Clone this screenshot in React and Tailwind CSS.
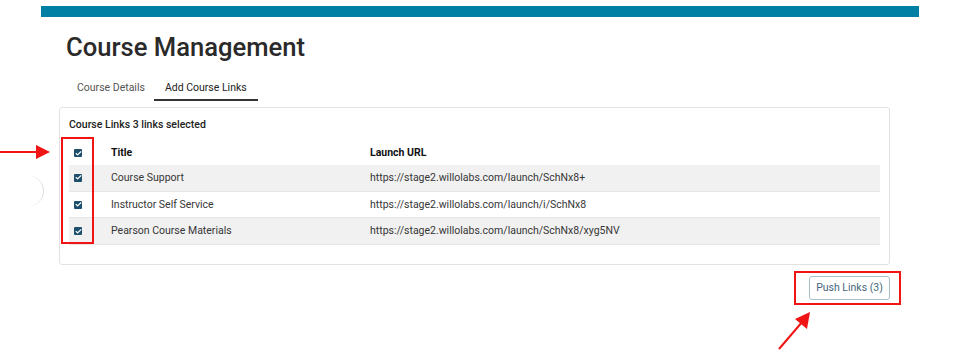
import { Check } from 'lucide-react';

const links = [
  { title: 'Course Support', url: 'https://stage2.willolabs.com/launch/SchNx8+' },
  { title: 'Instructor Self Service', url: 'https://stage2.willolabs.com/launch/i/SchNx8' },
  { title: 'Pearson Course Materials', url: 'https://stage2.willolabs.com/launch/SchNx8/xyg5NV' },
];

function Box() {
  return (
    <span className="flex h-[8px] w-[8px] items-center justify-center rounded-[1px] bg-[#1e4f6c]">
      <Check className="h-[7px] w-[7px] text-white" strokeWidth={4} />
    </span>
  );
}

export default function App() {
  return (
    <div className="relative h-[358px] w-[956px] overflow-hidden bg-white font-['Roboto',sans-serif]">
      {/* top bar */}
      <div className="ml-[41px] mt-[6px] h-[11px] w-[878px] bg-[#007fa5]" />

      <div className="ml-[59px] w-[831px]">
        <h1 className="ml-[7px] mt-[14px] text-[25.6px] leading-[32px] font-medium text-[#2a2a2a]">Course Management</h1>

        {/* tabs */}
        <div className="mt-[16px] flex text-[10.5px] leading-[14px]">
          <div className="pl-[18px] pr-[9px] pb-[4px] pt-[2px] text-[#555]">Course Details</div>
          <div className="border-b-2 border-[#333] px-[11px] pb-[4px] pt-[2px] text-[#222]">Add Course Links</div>
        </div>

        {/* card */}
        <div className="mt-[6px] h-[158px] rounded-[3px] border border-[#e2e2e2] px-[9px] pt-[10px]">
          <div className="text-[10.5px] leading-[14px] font-medium text-[#222]">Course Links 3 links selected</div>
          <div className="mt-[9px] text-[10.5px] text-[#363636]">
            <div className="flex h-[24px] items-center font-bold text-[#111]">
              <div className="flex w-[42px] justify-start pl-[5px]"><Box /></div>
              <div className="w-[259px]">Title</div>
              <div>Launch URL</div>
            </div>
            {links.map((l, i) => (
              <div key={l.title} className={`flex h-[26.7px] items-center border-b border-[#e6e6e6] ${i % 2 === 0 ? 'bg-[#f1f1f1]' : 'bg-white'}`}>
                <div className="flex w-[42px] justify-start pl-[5px]"><Box /></div>
                <div className="w-[259px]">{l.title}</div>
                <div>{l.url}</div>
              </div>
            ))}
          </div>
        </div>

        <div className="mt-[11px] flex justify-end">
          <button className="h-[24px] w-[81px] rounded-[3px] border border-[#a9bfcc] text-[10.5px] text-[#46677d]">Push Links (3)</button>
        </div>
      </div>

      {/* faint arc on the left */}
      <div className="absolute left-[22px] top-[176px] h-[30px] w-[22px] rounded-r-full border-r border-[#dcdcdc]" />

      {/* annotations */}
      <div className="absolute left-[61px] top-[137px] h-[107px] w-[33px] border-2 border-[#f01414]" />
      <div className="absolute left-[794px] top-[271px] h-[34px] w-[107px] border-2 border-[#f01414]" />
      <svg className="absolute left-0 top-0" width="956" height="358">
        <line x1="0" y1="152" x2="38" y2="152" stroke="#f01414" strokeWidth="2" />
        <polygon points="36,145 50,152 36,159" fill="#f01414" />
        <line x1="779" y1="349" x2="803" y2="321" stroke="#f01414" strokeWidth="2" />
        <polygon points="810,312 807,329 795,319" fill="#f01414" />
      </svg>
    </div>
  );
}
